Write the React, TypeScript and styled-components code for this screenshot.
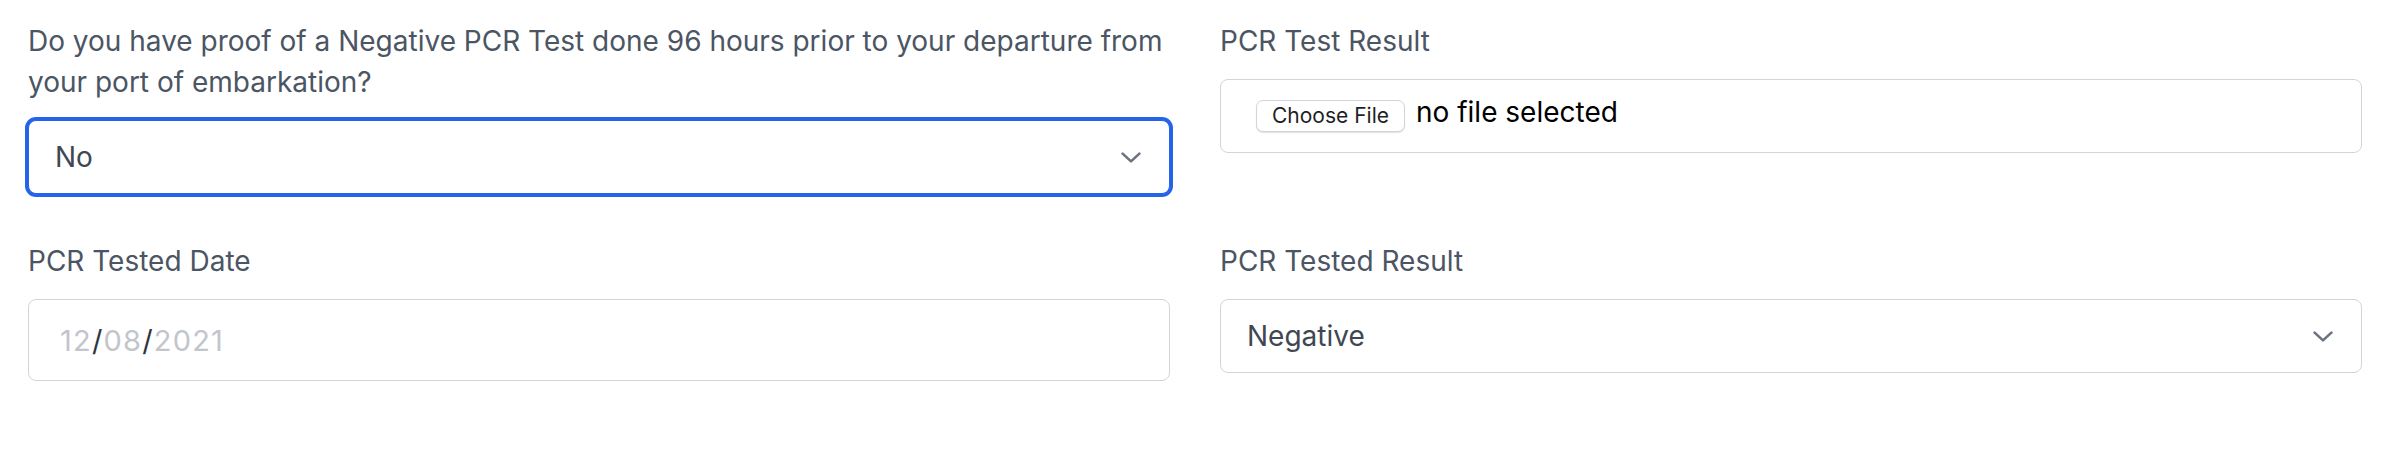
import React from 'react';
import styled, { createGlobalStyle, css } from 'styled-components';

const GlobalStyle = createGlobalStyle`
    html, body {
        margin: 0;
        padding: 0;
        background: #ffffff;
    }
    body {
        font-family: "Inter", "Noto Sans", sans-serif;
        -webkit-font-smoothing: antialiased;
    }
`;

const FormGrid = styled.div`
    display: grid;
    grid-template-columns: 1fr 1fr;
    column-gap: 50px;
    row-gap: 47px;
    padding: 21px 26px 0 28px;
    align-items: start;
`;

const Field = styled.div`
    display: flex;
    flex-direction: column;
    min-width: 0;
`;

const Label = styled.label`
    font-size: 28px;
    line-height: 41px;
    color: #4b5563;
    margin-bottom: 17px;
`;

const boxBase = css`
    box-sizing: border-box;
    width: 100%;
    height: 74px;
    border: 1px solid #d1d5db;
    border-radius: 8px;
    background: #ffffff;
    display: flex;
    align-items: center;
`;

const SelectBox = styled.div<{ $focused?: boolean }>`
    ${boxBase};
    justify-content: space-between;
    padding: 0 28px 0 26px;
    font-size: 28px;
    color: #3f4753;
    cursor: pointer;
    ${({ $focused }) =>
        $focused &&
        css`
            border-color: #2563eb;
            box-shadow: 0 0 0 3px #2563eb;
        `}
`;

const Chevron = styled.svg`
    width: 20px;
    height: 11px;
    flex-shrink: 0;
    color: #6b7280;
`;

const FileBox = styled.div`
    ${boxBase};
    padding: 0 0 0 35px;
    gap: 11px;
`;

const ChooseButton = styled.button`
    box-sizing: border-box;
    height: 32px;
    padding: 0 15px;
    border: 1px solid #d4d4d8;
    border-radius: 7px;
    background: #ffffff;
    box-shadow: 0 1px 1px rgba(0, 0, 0, 0.12);
    font-family: "Inter", "Noto Sans", sans-serif;
    font-size: 21px;
    color: #1f1f1f;
    line-height: 30px;
    cursor: pointer;
`;

const FileName = styled.span`
    font-size: 28px;
    color: #000000;
    margin-top: -8px;
`;

const DateBox = styled.div`
    ${boxBase};
    height: 82px;
    padding: 0 0 0 31px;
    font-size: 29px;
    letter-spacing: 1.2px;
`;

const DatePart = styled.span`
    color: #c2c5cc;
`;

const DateSlash = styled.span`
    color: #2f3640;
`;

const ChevronIcon = () => (
    <Chevron viewBox="0 0 20 11" fill="none">
        <polyline points="1.6,1.6 10,9.4 18.4,1.6" stroke="currentColor" strokeWidth="2.6" strokeLinecap="round" strokeLinejoin="round" />
    </Chevron>
);

const App: React.FC = () => {
    return (
        <>
            <GlobalStyle />
            <FormGrid>
                <Field>
                    <Label>Do you have proof of a Negative PCR Test done 96 hours prior to your departure from your port of embarkation?</Label>
                    <SelectBox $focused>
                        <span>No</span>
                        <ChevronIcon />
                    </SelectBox>
                </Field>
                <Field>
                    <Label>PCR Test Result</Label>
                    <FileBox>
                        <ChooseButton type="button">Choose File</ChooseButton>
                        <FileName>no file selected</FileName>
                    </FileBox>
                </Field>
                <Field>
                    <Label>PCR Tested Date</Label>
                    <DateBox>
                        <DatePart>12</DatePart>
                        <DateSlash>/</DateSlash>
                        <DatePart>08</DatePart>
                        <DateSlash>/</DateSlash>
                        <DatePart>2021</DatePart>
                    </DateBox>
                </Field>
                <Field>
                    <Label>PCR Tested Result</Label>
                    <SelectBox>
                        <span>Negative</span>
                        <ChevronIcon />
                    </SelectBox>
                </Field>
            </FormGrid>
        </>
    );
};

export default App;
